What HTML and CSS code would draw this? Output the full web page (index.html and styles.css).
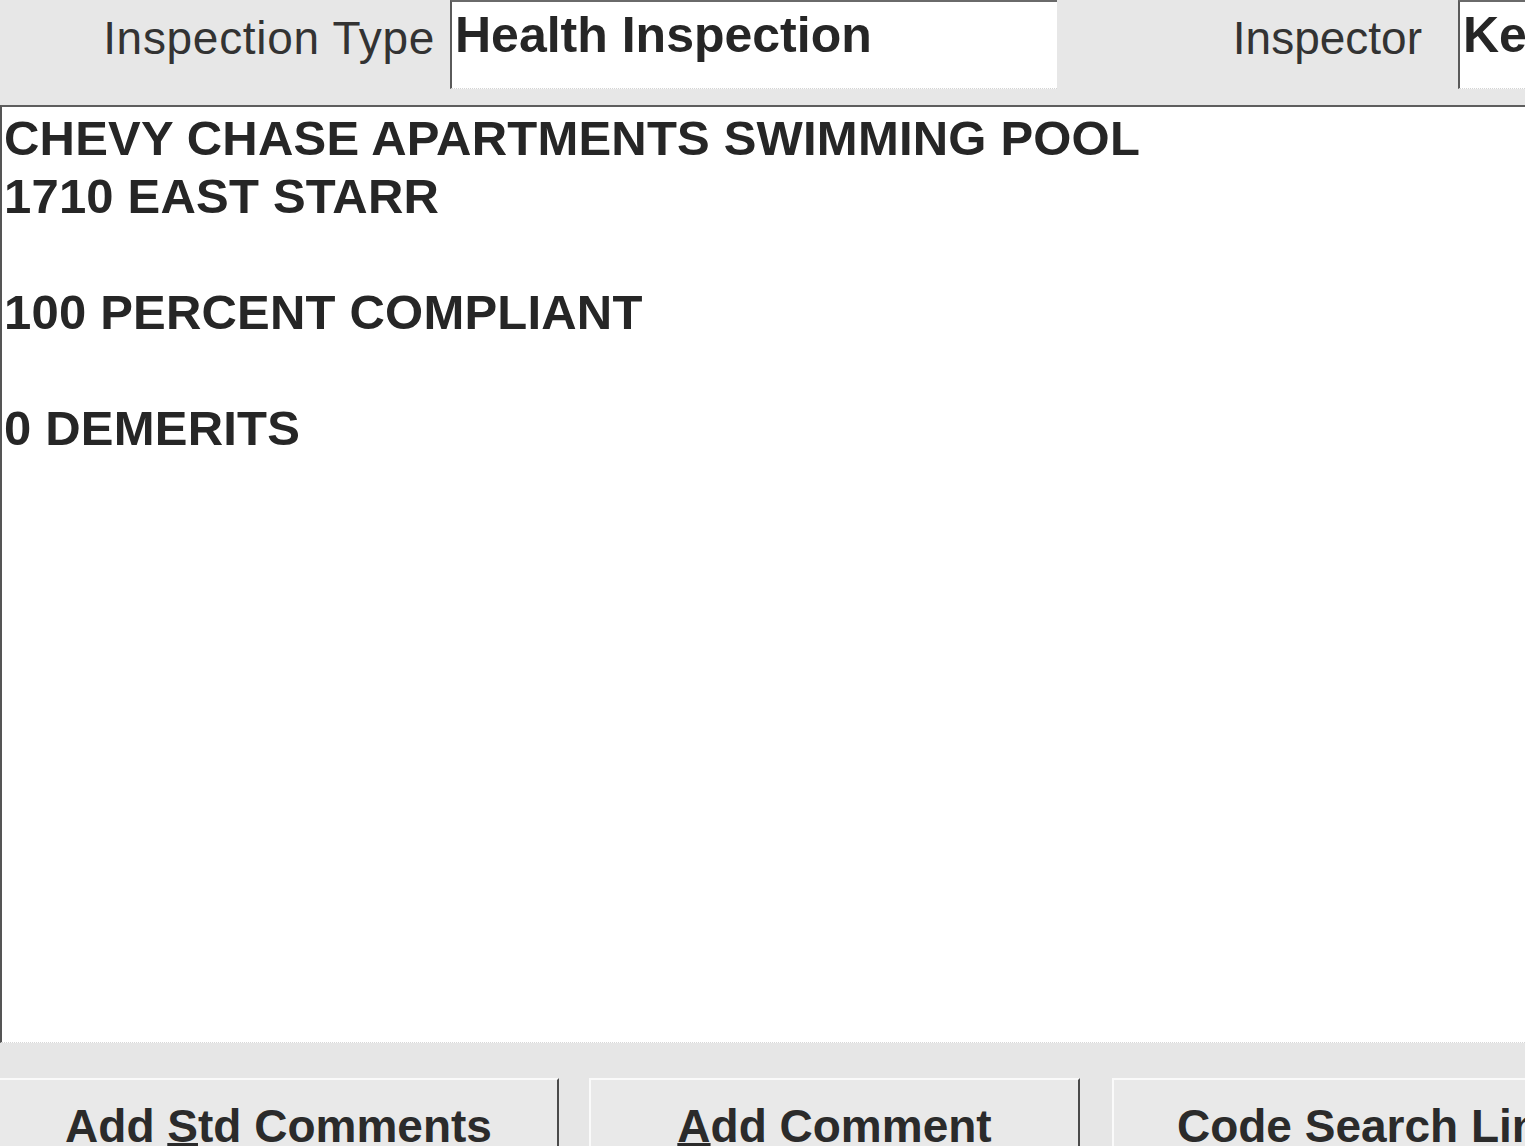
FILE: index.html
```html
<!DOCTYPE html>
<html>
<head>
<meta charset="utf-8">
<title>Inspection Comments</title>
<link rel="stylesheet" href="styles.css">
</head>
<body>
<div class="screen">
  <div class="topbar">
    <div class="label label-type">Inspection Type</div>
    <div class="field field-type">Health Inspection</div>
    <div class="label label-inspector">Inspector</div>
    <div class="field field-inspector">Ke</div>
  </div>
  <div class="comments">
    <div class="line">CHEVY CHASE APARTMENTS SWIMMING POOL</div>
    <div class="line">1710 EAST STARR</div>
    <div class="line blank"></div>
    <div class="line">100 PERCENT COMPLIANT</div>
    <div class="line blank"></div>
    <div class="line">0 DEMERITS</div>
  </div>
  <div class="buttons">
    <div class="btn btn-std">Add <u>S</u>td Comments</div>
    <div class="btn btn-add"><u>A</u>dd Comment</div>
    <div class="btn btn-code">Code Search Lines</div>
  </div>
</div>
</body>
</html>
```

FILE: styles.css
```css
html, body {
  margin: 0;
  padding: 0;
}
body {
  width: 1525px;
  height: 1146px;
  overflow: hidden;
  background: #e6e6e6;
  font-family: "Liberation Sans", Arial, sans-serif;
  color: #2a2a2a;
}
.screen {
  width: 1525px;
  height: 1146px;
  display: flex;
  flex-direction: column;
  overflow: hidden;
}
.topbar {
  flex-shrink: 0;
  height: 105px;
  display: grid;
  grid-template-columns: 450px 607px 401px 67px;
  align-items: start;
  background: #e7e7e7;
}
.label {
  font-size: 46px;
  line-height: 46px;
  padding-top: 15px;
  padding-right: 15px;
  text-align: right;
  color: #333;
  white-space: nowrap;
}
.label-type {
  letter-spacing: 0.7px;
}
.label-inspector {
  padding-right: 36px;
}
.field {
  box-sizing: border-box;
  height: 89px;
  background: #fff;
  border-top: 2px solid #6a6a6a;
  border-left: 2px solid #5a5a5a;
  border-bottom: 1px dotted #d4d4d4;
  font-weight: bold;
  font-size: 50px;
  line-height: 50px;
  padding-top: 8px;
  padding-left: 3px;
  white-space: nowrap;
  overflow: hidden;
  color: #262626;
}
.comments {
  flex-shrink: 0;
  height: 938px;
  box-sizing: border-box;
  background: #fff;
  border-top: 2px solid #5e5e5e;
  border-left: 2px solid #555;
  border-bottom: 1px dotted #d8d8d8;
  padding: 2px 0 0 2px;
  font-weight: bold;
  font-size: 49px;
  line-height: 58px;
  letter-spacing: 0.2px;
  color: #262626;
}
.line {
  white-space: nowrap;
}
.blank {
  height: 58px;
}
.buttons {
  flex-shrink: 0;
  display: flex;
  align-items: flex-start;
  padding-top: 35px;
  background: #e6e6e6;
}
.btn {
  height: 100px;
  box-sizing: border-box;
  border-top: 2px solid #fafafa;
  background: #e9e9e9;
  font-weight: bold;
  font-size: 46px;
  line-height: 46px;
  padding-top: 23px;
  text-align: center;
  white-space: nowrap;
  color: #2b2b2b;
  flex-shrink: 0;
}
.btn u {
  text-decoration-thickness: 3px;
  text-underline-offset: 1px;
}
.btn-std {
  width: 559px;
  border-right: 2px solid #4a4a4a;
}
.btn-add {
  margin-left: 30px;
  width: 491px;
  border-left: 2px solid #fafafa;
  border-right: 2px solid #4a4a4a;
}
.btn-code {
  margin-left: 32px;
  width: 542px;
  border-left: 2px solid #fafafa;
}
```
